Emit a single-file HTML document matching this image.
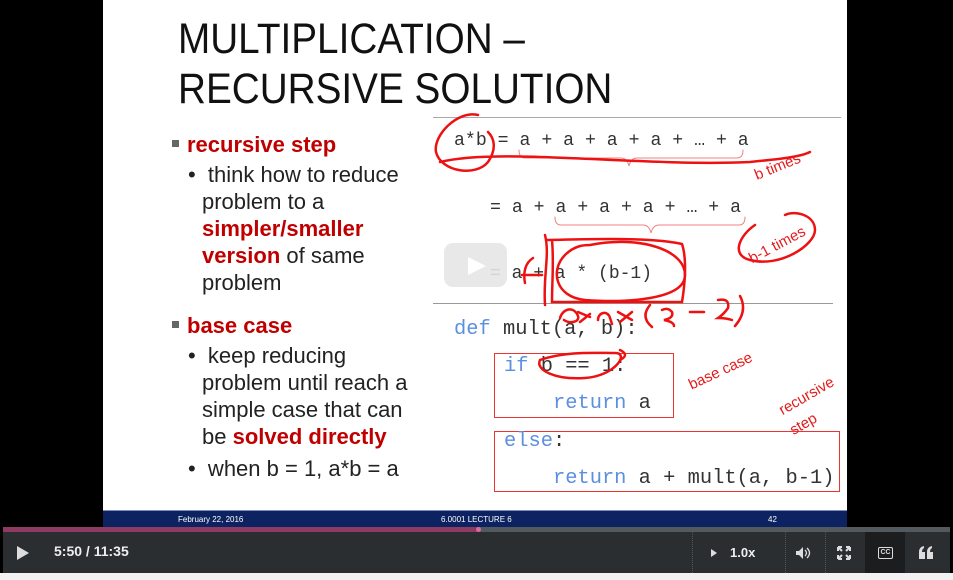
<!DOCTYPE html>
<html><head><meta charset="utf-8"><style>
*{margin:0;padding:0;box-sizing:border-box}
body{width:953px;height:580px;background:#000;position:relative;overflow:hidden;font-family:"Liberation Sans",sans-serif}
.a{position:absolute;white-space:nowrap}
#slide{position:absolute;left:103px;top:0;width:744px;height:527px;background:#fff}
.t{font-size:43px;color:#111;left:178px;line-height:46px;transform:scaleX(.9);transform-origin:0 0}
.b{font-size:22px;color:#222}
.r{color:#c00000;font-weight:bold}
.m{font-family:"Liberation Mono",monospace;color:#333}
.kw{color:#5b8fe0}
.hw{color:#e41b1b;font-family:"Liberation Sans",sans-serif}
</style></head><body>
<div id="slide"></div>
<div class="a t" style="top:16px">MULTIPLICATION –</div>
<div class="a t" style="top:66px">RECURSIVE SOLUTION</div>
<div class="a" style="left:433px;top:117px;width:408px;height:1px;background:#aaa"></div>
<div class="a" style="left:433px;top:303px;width:400px;height:1px;background:#999"></div>

<div class="a" style="left:172px;top:140px;width:7px;height:7px;background:#666"></div>
<div class="a b r" style="left:187px;top:132px">recursive step</div>
<div class="a b" style="left:188px;top:162px">•&nbsp; think how to reduce</div>
<div class="a b" style="left:202px;top:189px">problem to a</div>
<div class="a b r" style="left:202px;top:216px">simpler/smaller</div>
<div class="a b" style="left:202px;top:243px"><span class="r">version</span> of same</div>
<div class="a b" style="left:202px;top:270px">problem</div>
<div class="a" style="left:172px;top:321px;width:7px;height:7px;background:#666"></div>
<div class="a b r" style="left:187px;top:313px">base case</div>
<div class="a b" style="left:188px;top:343px">•&nbsp; keep reducing</div>
<div class="a b" style="left:202px;top:370px">problem until reach a</div>
<div class="a b" style="left:202px;top:397px">simple case that can</div>
<div class="a b" style="left:202px;top:424px">be <span class="r">solved directly</span></div>
<div class="a b" style="left:188px;top:456px">•&nbsp; when b = 1, a*b = a</div>

<div class="a m" style="left:454px;top:131px;font-size:18.2px">a*b = a + a + a + a + … + a</div>
<div class="a m" style="left:490px;top:198px;font-size:18.2px">= a + a + a + a + … + a</div>
<div class="a m" style="left:490px;top:264px;font-size:18px">= a + a * (b-1)</div>
<div class="a" style="left:444px;top:243px;width:63px;height:44px;background:#e6e6e6;border-radius:9px;opacity:.9"></div>
<svg class="a" style="left:466px;top:255px" width="22" height="22"><path d="M2 2L20 11L2 20Z" fill="#fff"/></svg>

<div class="a m" style="left:454px;top:318px;font-size:20.4px"><span class="kw">def</span> mult(a, b):</div>
<div class="a" style="left:494px;top:353px;width:180px;height:65px;border:1.5px solid #e33"></div>
<div class="a m" style="left:504px;top:355px;font-size:20.4px"><span class="kw">if</span> b == 1:</div>
<div class="a m" style="left:553px;top:392px;font-size:20.4px"><span class="kw">return</span> a</div>
<div class="a" style="left:494px;top:431px;width:346px;height:61px;border:1.5px solid #e33"></div>
<div class="a m" style="left:504px;top:430px;font-size:20.4px"><span class="kw">else</span>:</div>
<div class="a m" style="left:553px;top:467px;font-size:20.4px"><span class="kw">return</span> a + mult(a, b-1)</div>

<svg class="a" style="left:0;top:0" width="953" height="527" fill="none" stroke="#ee1111" stroke-width="2.5" stroke-linecap="round">
<path d="M519 150q0 8 6 8h96q6 0 8 8q2-8 8-8h100q6 0 6-8" stroke="#f08080" stroke-width="1"/>
<path d="M555 217q0 8 6 8h82q6 0 8 8q2-8 8-8h80q6 0 6-8" stroke="#f08080" stroke-width="1"/>
<path d="M478 115c-20-5-45 20-42 37c5 20 40 25 52 10c10-15 5-25 0-30M440 162c60-15 200 5 310 0c30-3 50-5 60-10"/>
<path d="M547 240c20 0 100-4 135 4c5 15 3 40 0 58l-130 0c0-20 2-40 0-62"/>
<path d="M590 245c50-10 95 5 95 30c0 25-60 28-100 25c-30-3-35-30-20-45c10-10 20-10 25-10"/>
<path d="M545 235c5 20-2 40 0 70M533 258c-8 5-10 15-8 25M522 275l20 0"/>
<path d="M560 318c3-10 14-12 18-2c2 6 -8 8 -14 4M578 312l12 5M580 322l10-8M598 320c0-8 10-10 12-2l2 6M618 312l14 8M620 322l12-10M650 305q-10 12 2 22M662 310q6-3 10 2q2 6-8 8q10 2 10 6M690 312l14 0M718 300q12-2 10 8q-4 6-10 10q8 0 14 2M740 296q8 15 -5 30"/>
<path d="M755 225c-15 10-25 30-5 35c30 8 65-15 65-30c0-15-20-20-30-15"/>
<path d="M540 360c-5 10 15 20 45 18c30-2 45-25 30-25c-20 0-50-2-75 7M620 350q10 5 0 10"/>
</svg>
<div class="a hw" style="left:752px;top:168px;font-size:15px;transform:rotate(-22deg);transform-origin:0 0">b times</div>
<div class="a hw" style="left:746px;top:252px;font-size:15px;transform:rotate(-28deg);transform-origin:0 0">b-1 times</div>
<div class="a hw" style="left:686px;top:378px;font-size:15px;transform:rotate(-25deg);transform-origin:0 0">base case</div>
<div class="a hw" style="left:776px;top:404px;font-size:15px;transform:rotate(-30deg);transform-origin:0 0">recursive</div>
<div class="a hw" style="left:787px;top:424px;font-size:15px;transform:rotate(-30deg);transform-origin:0 0">step</div>

<div class="a" style="left:103px;top:510px;width:744px;height:1px;background:#7a8fb8"></div>
<div class="a" style="left:103px;top:511px;width:744px;height:16px;background:#0d2260"></div>
<div class="a" style="left:178px;top:515px;font-size:8px;color:#fff">February 22, 2016</div>
<div class="a" style="left:441px;top:515px;font-size:8px;color:#fff">6.0001 LECTURE 6</div>
<div class="a" style="left:768px;top:515px;font-size:8px;color:#fff">42</div>

<div class="a" style="left:3px;top:527px;width:947px;height:5px;background:#525a60"></div>
<div class="a" style="left:3px;top:527px;width:475px;height:5px;background:#8d3b63"></div>
<div class="a" style="left:476px;top:527px;width:5px;height:5px;border-radius:50%;background:#d86aa0"></div>
<div class="a" style="left:3px;top:532px;width:947px;height:41px;background:#2b2e31"></div>
<div class="a" style="left:0;top:573px;width:953px;height:7px;background:#f2f2f2"></div>
<svg class="a" style="left:16px;top:545px" width="14" height="16"><path d="M1 1L13 8L1 15Z" fill="#ddd"/></svg>
<div class="a" style="left:54px;top:543px;font-size:14px;color:#eee;font-weight:bold">5:50 / 11:35</div>
<div class="a" style="left:692px;top:532px;width:1px;height:41px;border-left:1px dotted #555"></div>
<div class="a" style="left:785px;top:532px;width:1px;height:41px;border-left:1px dotted #555"></div>
<div class="a" style="left:825px;top:532px;width:1px;height:41px;border-left:1px dotted #555"></div>
<div class="a" style="left:865px;top:532px;width:40px;height:41px;background:#1b1d1f"></div>
<svg class="a" style="left:710px;top:548px" width="8" height="10"><path d="M1 1L7 5L1 9Z" fill="#ddd"/></svg>
<div class="a" style="left:730px;top:545px;font-size:13px;color:#eee;font-weight:bold">1.0x</div>
<svg class="a" style="left:795px;top:546px" width="16" height="14" fill="#ddd"><path d="M1 5h3l4-4v12l-4-4H1Z"/><path d="M10 4q3 3 0 6M12 2q5 5 0 10" stroke="#ddd" fill="none" stroke-width="1.3"/></svg>
<svg class="a" style="left:837px;top:546px" width="14" height="14" stroke="#ddd" stroke-width="2" fill="none"><path d="M1 1l4 4M13 1l-4 4M1 13l4-4M13 13l-4-4M1 1h4M1 1v4M13 1h-4M13 1v4M1 13h4M1 13v-4M13 13h-4M13 13v-4"/></svg>
<div class="a" style="left:878px;top:547px;width:15px;height:12px;border:1.5px solid #ddd;border-radius:2px;font-size:7px;color:#ddd;font-weight:bold;text-align:center;line-height:9px">CC</div>
<svg class="a" style="left:919px;top:546px" width="14" height="13" fill="#ddd"><path d="M0 6q0-5 5-6v2q-2 1-2 4h3v7H0ZM8 6q0-5 5-6v2q-2 1-2 4h3v7H8Z"/></svg>
</body></html>
